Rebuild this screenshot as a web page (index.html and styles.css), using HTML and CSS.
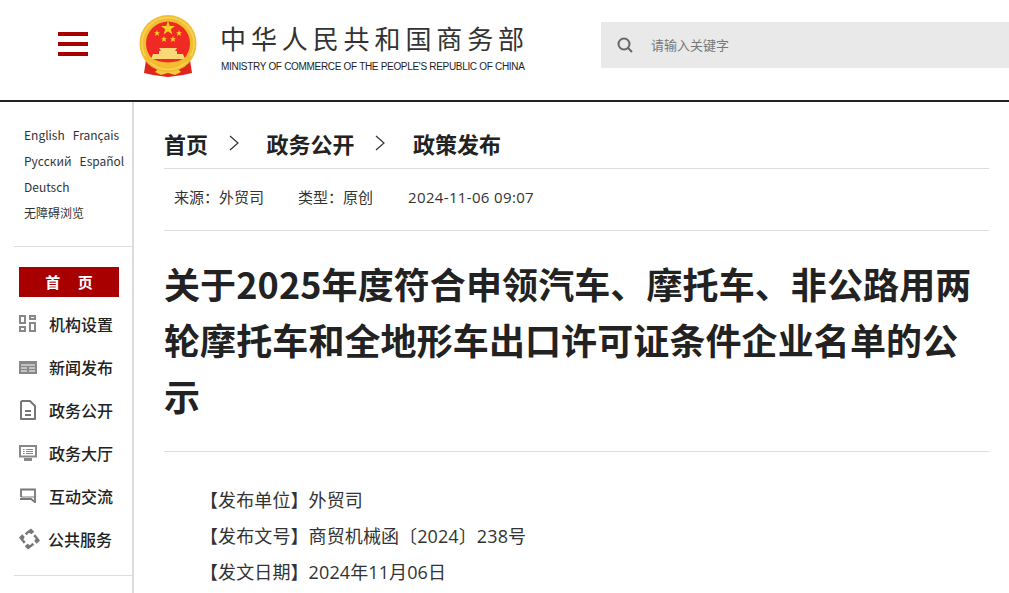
FILE: index.html
```html
<!DOCTYPE html>
<html lang="zh-CN">
<head>
  <meta charset="UTF-8">
  <title>中华人民共和国商务部</title>
  <link rel="stylesheet" href="styles.css">
</head>
<body>
  <header class="top-bar">
    <a class="menu-btn" href="#"><span></span><span></span><span></span></a>
    <svg class="emblem" viewBox="0 0 58 62" width="58" height="62">
      <path d="M7 45 L5 58 L14 60 L29 62 L44 60 L53 58 L51 45Z" fill="#e0261c"/>
      <path d="M16 57 Q22 50 29 55 Q36 50 42 57 L36 60 L29 58 L22 60Z" fill="#f4c93e"/>
      <circle cx="29" cy="28.500" r="28.500" fill="#f2bd2e"/>
      <circle cx="29" cy="28.500" r="26" fill="none" stroke="#f9d25a" stroke-width="1.500"/>
      <circle cx="29" cy="28.500" r="22" fill="#ef2a24"/>
      <polygon points="29,6 30.800,11 36,11 31.800,14.200 33.400,19.500 29,16.300 24.600,19.500 26.200,14.200 22,11 27.200,11" fill="#f6d21f"/>
      <polygon points="18,15 18.800,17.200 21,17.200 19.300,18.600 20,21 18,19.600 16,21 16.700,18.600 15,17.200 17.200,17.200" fill="#f6d21f"/>
      <polygon points="40,15 40.800,17.200 43,17.200 41.300,18.600 42,21 40,19.600 38,21 38.700,18.600 37,17.200 39.200,17.200" fill="#f6d21f"/>
      <polygon points="25,21 25.800,23.200 28,23.200 26.300,24.600 27,27 25,25.600 23,27 23.700,24.600 22,23.200 24.200,23.200" fill="#f6d21f"/>
      <polygon points="34,21 34.800,23.200 37,23.200 35.300,24.600 36,27 34,25.600 32,27 32.700,24.600 31,23.200 33.200,23.200" fill="#f6d21f"/>
      <path d="M20 33 H38 L36 36 H38 V39 H44 L46 44 H12 L14 39 H20 V36 H22Z" fill="#f9d877"/>
      <path d="M5 43 Q29 62 53 43 L51 40 Q29 55 7 40Z" fill="#f2bd2e"/>
    </svg>
    <div class="brand">
      <div class="brand-cn">中华人民共和国商务部</div>
      <div class="brand-en">MINISTRY OF COMMERCE OF THE PEOPLE'S REPUBLIC OF CHINA</div>
    </div>
    <div class="search">
      <svg viewBox="0 0 16 16" width="16" height="16"><circle cx="7" cy="7" r="5.500" fill="none" stroke="#666" stroke-width="2"/><path d="M11 11 L15 15" stroke="#666" stroke-width="2"/></svg>
      <span>请输入关键字</span>
    </div>
  </header>

  <div class="page">
    <aside class="side">
      <div class="langs">
        <div><a href="#">English</a><a href="#">Français</a></div>
        <div><a href="#">Русский</a><a href="#">Español</a></div>
        <div><a href="#">Deutsch</a></div>
        <div><a href="#">无障碍浏览</a></div>
      </div>
      <nav class="nav">
        <a class="nav-home" href="#">首 页</a>
        <a class="nav-item" href="#">
          <svg viewBox="0 0 18 18" width="18" height="18" fill="none" stroke="#888" stroke-width="2"><rect x="1" y="1" width="5" height="7"/><rect x="11" y="1" width="5" height="3"/><rect x="1" y="12" width="5" height="4"/><rect x="11" y="8" width="5" height="8"/></svg>
          机构设置
        </a>
        <a class="nav-item" href="#">
          <svg viewBox="0 0 18 18" width="18" height="18"><path d="M0 3 H18 V16 H0Z" fill="#888"/><path d="M2 7 H16 M2 10 H8 M10 10 H16 M2 13 H8 M10 13 H16" stroke="#fff" stroke-width="1"/></svg>
          新闻发布
        </a>
        <a class="nav-item" href="#">
          <svg viewBox="0 0 18 20" width="18" height="20" fill="none" stroke="#777" stroke-width="2"><path d="M3 1 H11 L16 6 V19 H2 V2Z" stroke-linejoin="round"/><path d="M6 11 H12 M6 15 H12"/></svg>
          政务公开
        </a>
        <a class="nav-item" href="#">
          <svg viewBox="0 0 18 18" width="18" height="18" fill="none" stroke="#888"><rect x="1" y="2" width="16" height="10.500" stroke-width="2"/><path d="M4 5.500 H5.500 M7 5.500 H14 M4 7.500 H5.500 M7 7.500 H14 M4 9.500 H5.500 M7 9.500 H14" stroke-width="1"/><path d="M5 15.500 H13" stroke-width="3"/></svg>
          政务大厅
        </a>
        <a class="nav-item" href="#">
          <svg viewBox="0 0 18 18" width="18" height="18" fill="none" stroke="#777" stroke-width="1.800"><path d="M2 10 V2.500 H16 V16"/><path d="M1 12 H12 L16 15"/><path d="M2 10 H16" stroke-width="1"/></svg>
          互动交流
        </a>
        <a class="nav-item" href="#">
          <svg class="icon-wide" viewBox="0 0 22 22" width="21" height="22" fill="#777">
            <path d="M12.500 0 L16 3.500 L13 6 L10.500 4.500 L8 7 L6 5Z"/>
            <path d="M12.500 0 L16 3.500 L13 6 L10.500 4.500 L8 7 L6 5Z" transform="rotate(90 11 11)"/>
            <path d="M12.500 0 L16 3.500 L13 6 L10.500 4.500 L8 7 L6 5Z" transform="rotate(180 11 11)"/>
            <path d="M12.500 0 L16 3.500 L13 6 L10.500 4.500 L8 7 L6 5Z" transform="rotate(270 11 11)"/>
          </svg>
          公共服务
        </a>
      </nav>
    </aside>

    <main class="content">
      <div class="crumbs">
        <a href="#">首页</a>
        <svg viewBox="0 0 12 16" width="12" height="16" fill="none" stroke="#333" stroke-width="1.200"><path d="M2 1 L10 8 L2 15"/></svg>
        <a href="#">政务公开</a>
        <svg viewBox="0 0 12 16" width="12" height="16" fill="none" stroke="#333" stroke-width="1.200"><path d="M2 1 L10 8 L2 15"/></svg>
        <a href="#">政策发布</a>
      </div>
      <div class="meta">
        <span>来源：外贸司</span>
        <span>类型：原创</span>
        <span class="meta-date">2024-11-06 09:07</span>
      </div>
      <h1 class="title">关于2025年度符合申领汽车、摩托车、非公路用两轮摩托车和全地形车出口许可证条件企业名单的公示</h1>
      <div class="article">
        <p>【发布单位】外贸司</p>
        <p>【发布文号】商贸机械函〔2024〕238号</p>
        <p>【发文日期】2024年11月06日</p>
      </div>
    </main>
  </div>
</body>
</html>
```

FILE: styles.css
```css
* {
  box-sizing: border-box;
}

html, body {
  height: 593px;
  overflow: hidden;
}

body {
  margin: 0;
  background: #fff;
  color: #222;
  font-family: "Noto Sans CJK SC", "Open Sans", sans-serif;
}

a {
  color: inherit;
  text-decoration: none;
}

.top-bar {
  height: 102px;
  border-bottom: 2px solid #222;
  display: flex;
  align-items: flex-start;
}

.menu-btn {
  width: 30px;
  margin: 32px 0 0 58px;
  display: flex;
  flex-direction: column;
  gap: 6px;
}

.menu-btn span {
  height: 4px;
  background: #a80000;
}

.emblem {
  margin: 15px 0 0 51px;
}

.brand {
  margin: 21px 0 0 24px;
  width: 380px;
}

.brand-cn {
  font-family: "Noto Sans CJK SC", sans-serif;
  font-size: 26px;
  line-height: 34px;
  letter-spacing: 4.900px;
  margin-left: -1px;
  color: #333;
  white-space: nowrap;
}

.brand-en {
  font-family: "Liberation Sans", sans-serif;
  font-size: 10px;
  line-height: 14px;
  margin-top: 5px;
  letter-spacing: -0.310px;
  color: #222;
  white-space: nowrap;
}

.search {
  margin: 22px 0 0 0;
  flex: 1;
  height: 46px;
  background: #e9e9e9;
  display: flex;
  align-items: center;
  gap: 18px;
  padding-left: 16px;
  font-size: 13px;
  color: #777;
}

.search span {
  padding-bottom: 2px;
}

.page {
  display: flex;
}

.side {
  width: 134px;
  height: 491px;
  border-right: 2px solid #ddd;
  padding-left: 14px;
  flex: none;
}

.langs {
  padding: 20px 0 20px 10px;
  border-bottom: 1px solid #ddd;
  font-size: 12px;
  line-height: 26px;
  color: #333;
  white-space: nowrap;
}

.langs a {
  margin-right: 8px;
}

.nav {
  padding: 20px 0 15px 5px;
  border-bottom: 1px solid #ddd;
  display: flex;
  flex-direction: column;
}

.nav-home {
  width: 100px;
  height: 30px;
  margin-bottom: 5px;
  background: #a80000;
  color: #fff;
  font-family: "Noto Sans CJK SC", sans-serif;
  font-weight: 700;
  font-size: 15px;
  line-height: 30px;
  text-align: center;
  word-spacing: 14px;
}

.nav-item {
  height: 43px;
  display: flex;
  align-items: center;
  gap: 12px;
  font-size: 16px;
  font-weight: 500;
  color: #222;
  white-space: nowrap;
}

.nav-item svg {
  flex: none;
}

.nav-item .icon-wide {
  margin-right: -4px;
}

.content {
  width: 825px;
  margin-left: 30px;
}

.crumbs {
  height: 67px;
  padding-top: 16px;
  border-bottom: 1px solid #ddd;
  display: flex;
  align-items: center;
  font-size: 22px;
  font-weight: 700;
  line-height: 40px;
}

.crumbs svg {
  margin: 0 27px 0 19.500px;
}

.meta {
  height: 62px;
  padding: 0 0 6px 10px;
  border-bottom: 1px solid #ddd;
  display: flex;
  align-items: center;
  gap: 34px;
  font-family: "Noto Sans CJK TC", sans-serif;
  font-size: 15px;
  color: #333;
  white-space: nowrap;
}

.meta-date {
  font-family: "Open Sans", sans-serif;
  font-size: 15px;
  letter-spacing: 0.350px;
  margin-left: 1px;
}

.title {
  margin: 0;
  padding: 24px 0 28px;
  border-bottom: 1px solid #ddd;
  font-size: 36px;
  line-height: 56px;
  font-weight: 700;
  letter-spacing: 0.100px;
  color: #222;
}

.article {
  padding: 30px 0 0 36px;
  font-family: "Open Sans", "Noto Sans CJK SC", sans-serif;
  font-size: 18px;
  line-height: 36px;
  letter-spacing: 0.100px;
  color: #333;
}

.article p {
  margin: 0;
}
```
